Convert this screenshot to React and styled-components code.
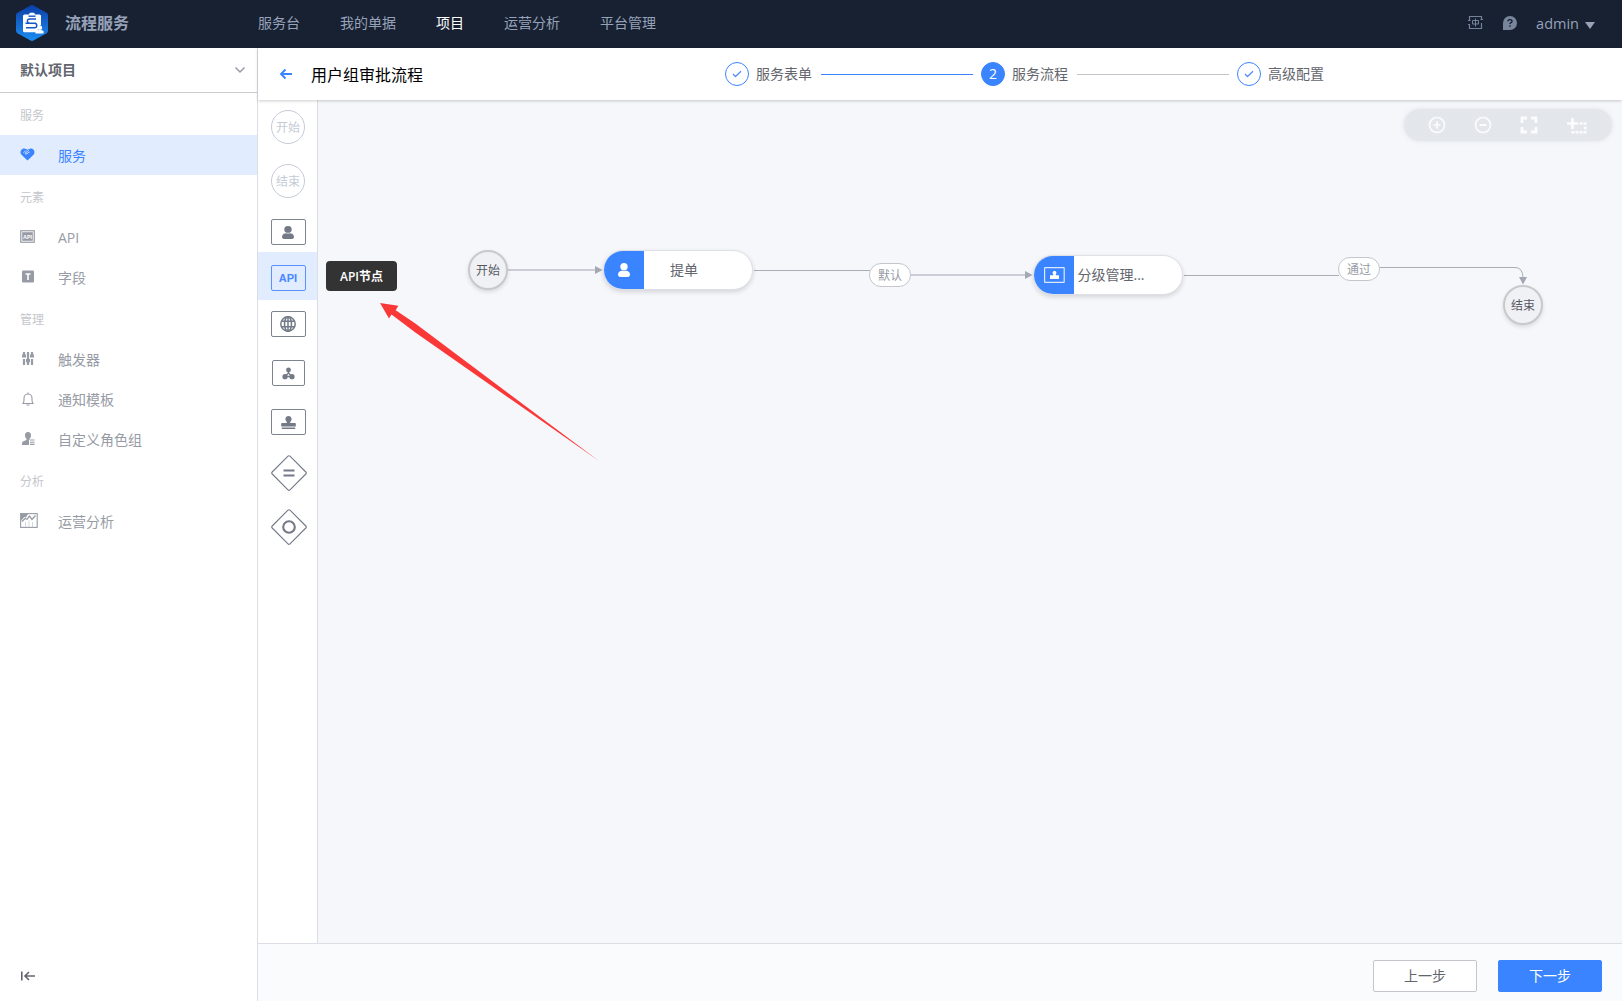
import React from "react";
import styled, { createGlobalStyle } from "styled-components";

const Global = createGlobalStyle`
  * { box-sizing: border-box; }
  body {
    margin: 0;
    font-family: "Open Sans", "Noto Sans CJK SC", sans-serif;
    font-size: 14px;
    color: #63656e;
  }
  svg { display: block; flex: none; }
`;

const Page = styled.div`
  display: flex;
  flex-direction: column;
  width: 100%;
  height: 100vh;
  min-height: 1001px;
  overflow: hidden;
  background: #fff;
`;

const TopBar = styled.header`
  display: flex;
  align-items: center;
  height: 48px;
  flex: none;
  padding: 0 27px 3px 16px;
  background: #182132;
  color: #96a2b9;
`;

const Brand = styled.div`
  display: flex;
  align-items: center;
  gap: 17px;
  width: 242px;
  font-size: 16px;
  font-weight: 700;
  line-height: 44px;
`;

const Nav = styled.nav`
  display: flex;
  gap: 40px;
  flex: 1;
`;

const NavItem = styled.span`
  line-height: 20px;
  color: ${(p) => (p.$active ? "#fff" : "#96a2b9")};
`;

const TopTools = styled.div`
  display: flex;
  align-items: center;
`;

const HelpLink = styled.span`
  margin-left: 20px;
`;

const User = styled.div`
  display: flex;
  align-items: center;
  gap: 6px;
  margin-left: 19px;
  padding-top: 2px;
  font-size: 14.5px;
  line-height: 20px;
`;

const Caret = styled.i`
  border: 5.5px solid transparent;
  border-top: 7px solid #96a2b9;
  border-bottom: 0;
  margin-top: 3px;
`;

const Body = styled.div`
  display: flex;
  flex: 1;
  min-height: 0;
`;

const Sidebar = styled.aside`
  display: flex;
  flex-direction: column;
  width: 258px;
  flex: none;
  border-right: 1px solid #dcdee5;
`;

const ProjectSelect = styled.div`
  display: flex;
  align-items: center;
  justify-content: space-between;
  height: 45px;
  padding: 0 11px 0 20px;
  border-bottom: 1px solid #cfcbd0;
  font-weight: 700;
  line-height: 20px;
  color: #63656e;
`;

const GroupTitle = styled.div`
  height: 42px;
  padding: 3px 20px 0;
  font-size: 12px;
  line-height: 39px;
  color: #c4c6cc;
`;

const MenuItem = styled.div`
  display: flex;
  align-items: center;
  height: 40px;
  padding-left: 20px;
  background: ${(p) => (p.$active ? "#e1ecff" : "transparent")};
  color: ${(p) => (p.$active ? "#3a84ff" : "#979ba5")};
`;

const MenuIcon = styled.span`
  width: 38px;
  margin-bottom: 1px;
`;

const MenuText = styled.span`
  padding-top: 2px;
  line-height: 20px;
`;

const Collapse = styled.div`
  margin-top: auto;
  padding: 0 0 18px 20px;
`;

const Main = styled.main`
  display: flex;
  flex-direction: column;
  flex: 1;
  min-width: 0;
`;

const PageHead = styled.div`
  display: flex;
  align-items: center;
  height: 52px;
  flex: none;
  padding-left: 21px;
  z-index: 1;
  background: #fff;
  box-shadow: 0 1px 3px rgba(0, 0, 0, 0.2);
`;

const PageTitle = styled.h1`
  width: 414px;
  margin: 0 0 0 18px;
  padding-top: 2px;
  font-size: 16px;
  font-weight: 400;
  line-height: 24px;
  color: #000;
`;

const Steps = styled.div`
  display: flex;
  align-items: center;
`;

const StepMark = styled.span`
  display: flex;
  align-items: center;
  justify-content: center;
  width: 24px;
  height: 24px;
  border: 1px solid #3a84ff;
  border-radius: 50%;
  background: ${(p) => (p.$current ? "#3a84ff" : "#fff")};
  color: #fff;
  line-height: 22px;
`;

const StepText = styled.span`
  width: 56px;
  margin-left: 7px;
  line-height: 20px;
  white-space: nowrap;
`;

const StepLine = styled.span`
  width: 152px;
  height: 1px;
  margin: 0 8px 0 9px;
  background: ${(p) => (p.$done ? "#3a84ff" : "#c4c6cc")};
`;

const Workspace = styled.div`
  display: flex;
  flex: 1;
  min-height: 0;
`;

const Palette = styled.div`
  width: 60px;
  flex: none;
  border-right: 1px solid #dcdee5;
  background: #fff;
`;

const PaletteRow = styled.div`
  display: flex;
  align-items: center;
  justify-content: center;
  position: relative;
  height: ${(p) => p.$h}px;
  padding-top: ${(p) => p.$top || 0}px;
  padding-left: ${(p) => p.$left || 1}px;
  background: ${(p) => (p.$active ? "#e1ecff" : "transparent")};
`;

const RoundTool = styled.span`
  width: 34px;
  height: 34px;
  border: 1px solid #c4cbd6;
  border-radius: 50%;
  font-size: 12px;
  line-height: 34px;
  text-align: center;
  color: #c4cbd6;
`;

const BoxTool = styled.span`
  display: flex;
  align-items: center;
  justify-content: center;
  width: ${(p) => p.$w || 35}px;
  height: 26px;
  border: 1px solid ${(p) => (p.$active ? "#5a90ff" : "#7d838f")};
  border-radius: 2px;
  color: ${(p) => (p.$active ? "#4a86ff" : "#737987")};
  font: bold 11px/24px "Liberation Sans", sans-serif;
`;

const Tip = styled.div`
  position: absolute;
  z-index: 3;
  left: 68px;
  top: 9px;
  width: 71px;
  height: 30px;
  border-radius: 4px;
  background: #333;
  font-size: 12px;
  font-weight: 600;
  line-height: 31px;
  text-align: center;
  white-space: nowrap;
  color: #fff;
`;

const Canvas = styled.div`
  position: relative;
  flex: 1;
  background: #f5f7fb;
`;

const Wires = styled.svg`
  position: absolute;
  left: 0;
  top: 0;
`;

const ZoomBar = styled.div`
  position: absolute;
  right: 10px;
  top: 9px;
  display: flex;
  align-items: center;
  gap: 28px;
  width: 208px;
  height: 32px;
  padding-left: 24px;
  border-radius: 16px;
  background: #e3e7ec;
  box-shadow: 0 0 4px rgba(200, 206, 216, 0.5);
`;

const Terminal = styled.div`
  position: absolute;
  left: ${(p) => p.$x}px;
  top: ${(p) => p.$y}px;
  width: 40px;
  height: 40px;
  border: 2px solid #c8c9cc;
  border-radius: 50%;
  background: #f0f1f5;
  box-shadow: 0 2px 4px rgba(0, 0, 0, 0.12);
  font-size: 12px;
  line-height: 37px;
  text-align: center;
  color: #575961;
`;

const TaskNode = styled.div`
  position: absolute;
  left: ${(p) => p.$x}px;
  top: ${(p) => p.$y}px;
  display: flex;
  width: 150px;
  height: 40px;
  border: 1px solid #dfe0e6;
  border-radius: 20px;
  overflow: hidden;
  background: #fff;
  box-shadow: 0 2px 5px rgba(0, 0, 0, 0.14);
`;

const TaskIcon = styled.span`
  display: flex;
  align-items: center;
  justify-content: center;
  width: 41px;
  margin-left: -1px;
  padding-left: 1px;
  background: #3a84ff;
`;

const TaskName = styled.span`
  width: 80px;
  padding-left: ${(p) => (p.$clipped ? 3.5 : 0)}px;
  line-height: 38px;
  text-align: ${(p) => (p.$clipped ? "left" : "center")};
  white-space: nowrap;
`;

const WireLabel = styled.span`
  position: absolute;
  left: ${(p) => p.$x}px;
  top: ${(p) => p.$y}px;
  width: 42px;
  height: 24px;
  border: 1px solid #c4c6cc;
  border-radius: 12px;
  background: #fff;
  font-size: 12px;
  line-height: 23px;
  text-align: center;
  color: #979ba5;
`;

const Footer = styled.footer`
  display: flex;
  align-items: flex-start;
  justify-content: flex-end;
  gap: 21px;
  height: 58px;
  flex: none;
  padding: 16px 20px 0;
  border-top: 1px solid #dcdee5;
  background: #fafbfd;
`;

const Button = styled.button`
  width: 104px;
  height: 32px;
  padding: 0;
  border: 1px solid ${(p) => (p.$primary ? "#3a84ff" : "#c4c6cc")};
  border-radius: 2px;
  background: ${(p) => (p.$primary ? "#3a84ff" : "#fff")};
  color: ${(p) => (p.$primary ? "#fff" : "#63656e")};
  font-family: inherit;
  font-size: 14px;
  line-height: 30px;
`;

const Logo = () => (
  <svg width="32" height="36" viewBox="0 0 32 36">
    <defs>
      <linearGradient id="hex" x1="0" y1="0" x2="0" y2="1">
        <stop offset="0" stopColor="#0b3fa8" />
        <stop offset="1" stopColor="#1c8df2" />
      </linearGradient>
    </defs>
    <path d="M14.5.5q1.500-.8 3 0l13 7.200q1.500.9 1.500 2.500v15.600q0 1.600-1.500 2.500l-13 7.200q-1.500.8-3 0l-13-7.200q-1.500-.9-1.500-2.500v-15.600q0-1.600 1.500-2.500z" fill="url(#hex)" />
    <path d="M8.500 9.500h4.500l.8-1.700h4.400l.8 1.700h4.500q1.500 0 1.500 1.500v9a3.500 3.500 0 0 0-2.500 5l-2.500 2.200H8.500Q7 27.200 7 25.700V11q0-1.500 1.500-1.500z" fill="#fff" />
    <g fill="none" stroke="#1558c4" strokeWidth="1.400">
      <path d="M12.500 11.200h7" />
      <path d="M20 14h-6.500a2 2 0 0 0 0 4.200H20M9.500 18.200h9a2.300 2.300 0 0 1 0 4.600H10" />
    </g>
    <circle cx="24" cy="22.800" r="2.200" fill="#fff" />
    <path d="M19.500 28.500v-2.500l3.300-1h2.400l2.300 1v2.500z" fill="#fff" />
  </svg>
);

const HeartIcon = () => (
  <svg width="15" height="13" viewBox="0 0 15 13">
    <path d="M1.400 1.700C2.600.3 4.600 0 6 .9l1.500.8L9 .9c1.400-.9 3.400-.6 4.600.8 1.300 1.500 1.100 3.700-.1 5.100L7.500 12.500 1.500 6.800C.3 5.400.1 3.200 1.400 1.700z" fill="#3a84ff" />
    <path d="M8.800 2.200 5 5.300q.6 1.300 2 .3L9.500 4M3.500 4.800l2.300-2.300" fill="none" stroke="#e1ecff" strokeWidth=".9" />
  </svg>
);

const ApiIcon = () => (
  <svg width="15" height="13" viewBox="0 0 15 13">
    <rect x=".75" y=".75" width="13.500" height="11.500" fill="#fff" stroke="#979ba5" strokeWidth="1.200" />
    <rect x="2.200" y="2.200" width="10.600" height="8.600" fill="#979ba5" />
    <text x="7.500" y="8.600" fontSize="5.500" fontWeight="700" fontFamily="Liberation Sans, sans-serif" fill="#fff" textAnchor="middle">API</text>
  </svg>
);

const FieldIcon = () => (
  <svg width="14" height="13" viewBox="0 0 14 13">
    <rect x="2" y=".5" width="12" height="12" rx="1" fill="#979ba5" />
    <path d="M5.500 4h5M8 4v6" stroke="#fff" strokeWidth="1.600" />
  </svg>
);

const TriggerIcon = () => (
  <svg width="14" height="13" viewBox="0 0 14 13">
    <path d="M4 0v4M8 0v7M12 0v4M4 7V13M8 10v3M12 7V13" stroke="#979ba5" strokeWidth="2.200" />
    <path d="M2 2.500h4v3H2zM6 7h4v3.300H6zM10 2.500h4v3h-4z" fill="#979ba5" />
  </svg>
);

const BellIcon = () => (
  <svg width="14" height="14" viewBox="0 0 14 14">
    <path d="M3 11.500q1-1.500 1-3.500V6a4 4 0 0 1 8 0v2q0 2 1 3.500z M8 .5V2 M6.500 13h3" fill="none" stroke="#979ba5" strokeWidth="1.100" />
  </svg>
);

const RoleIcon = () => (
  <svg width="15" height="13" viewBox="0 0 15 13">
    <path d="M8 0a3.300 3.300 0 0 1 3 3.500c0 1.500-.6 2.600-1.500 3.300v1.200H9v5H2v-2q0-1.500 2-2l2.500-1V6.800C5.600 6 5 5 5 3.500A3.300 3.300 0 0 1 8 0z" fill="#979ba5" />
    <path d="M10 8h4.500M10 10.200h4.500M10 12.400h4.500" stroke="#979ba5" strokeWidth="1.100" />
  </svg>
);

const ChartIcon = () => (
  <svg width="18" height="15" viewBox="0 0 18 15">
    <rect x=".6" y=".6" width="16.600" height="13.800" fill="#fff" stroke="#979ba5" strokeWidth="1.100" />
    <path d="M1 1h7L6 4.500 4.500 4 1 7.500z" fill="#979ba5" />
    <path d="M2 8.500 5 5.500l2 .8L9.500 3l2.500 3.500 3.500-4" fill="none" stroke="#979ba5" strokeWidth="1.300" />
    <path d="M5.500 9v5M9 7.500V14M12.500 9v5" stroke="#d5d7dc" strokeWidth="1" />
  </svg>
);

const LangIcon = () => (
  <svg width="15" height="15" viewBox="0 0 15 15" fill="none" stroke="#74819a">
    <path d="M1.500 5V1.500h12V4M13.500 8v5.500h-12V10M0 5.500h2.500M12.500 4.500H15M0 9.500h2" strokeWidth="1.200" />
    <path d="M4.500 5.500h6v3.500h-6zM7.500 3.500v8" strokeWidth="1" />
  </svg>
);

const HelpIcon = () => (
  <svg width="14" height="14" viewBox="0 0 14 14">
    <path d="M7 0a7 7 0 1 1 0 14H0V7a7 7 0 0 1 7-7z" fill="#79859d" />
    <path d="M5 5.300q0-1.700 2-1.700t2 1.600q0 .9-1 1.400-1 .4-1 1.500M7 9.200v1.500" fill="none" stroke="#182132" strokeWidth="1.400" />
  </svg>
);

const PersonIcon = ({ color, w = 12, h = 14 }) => (
  <svg width={w} height={h} viewBox="0 0 12 14" preserveAspectRatio="none">
    <circle cx="6" cy="3.700" r="3.700" fill={color} />
    <path d="M0 11.500C0 9 2 8 4 7.800q2 .8 4 0c2 .2 4 1.200 4 3.700Q12 14 9 14H3q-3 0-3-2.500z" fill={color} />
  </svg>
);

const GlobeIcon = () => (
  <svg width="16" height="16" viewBox="0 0 16 16" fill="none" stroke="#737987" strokeWidth="1.500">
    <circle cx="8" cy="8" r="7.200" />
    <ellipse cx="8" cy="8" rx="3.500" ry="7.200" />
    <path d="M8 1v14M1.500 5.300h13M1.500 10.700h13" />
  </svg>
);

const NetIcon = () => (
  <svg width="13" height="13" viewBox="0 0 13 13">
    <path d="M6.500 3v3L3 9.500h7L6.500 6" fill="none" stroke="#737987" strokeWidth="1.300" />
    <g fill="#737987">
      <circle cx="6.500" cy="3" r="2.400" />
      <circle cx="3" cy="9.700" r="2.600" />
      <circle cx="10" cy="9.700" r="2.600" />
    </g>
  </svg>
);

const StampIcon = () => (
  <svg width="15" height="13" viewBox="0 0 15 13" fill="#737987">
    <path d="M7.500 0a3.200 3.200 0 0 1 1.700 5.900V7H14q.8 0 .8.800V10.500H.2V7.800Q.2 7 1 7h4.800V5.900A3.200 3.200 0 0 1 7.500 0z" />
    <path d="M.8 11.500h13.400V13H.8z" />
  </svg>
);

const ApprovalIcon = () => (
  <svg width="21" height="16" viewBox="0 0 21 16">
    <rect x=".6" y=".6" width="19.600" height="14.800" rx=".5" fill="none" stroke="#dbe8ff" strokeWidth="1.200" />
    <path d="M10.500 3.700a2.100 2.100 0 0 1 1.300 3.600V8.300H15V12H6V8.300h3.200V7.300a2.100 2.100 0 0 1 1.300-3.600z" fill="#fff" />
  </svg>
);

const Diamond = ({ children }) => (
  <svg width="36" height="36" viewBox="0 0 36 36" fill="none" stroke="#737987">
    <path d="M17 1.200q1-1 2 0L34.800 17q1 1 0 2L19 34.800q-1 1-2 0L1.200 19q-1-1 0-2z" strokeWidth="1.100" />
    {children}
  </svg>
);

const Check = () => (
  <svg width="10" height="8" viewBox="0 0 10 8">
    <path d="M1 4l2.500 2.500L9 1.200" fill="none" stroke="#5a8cff" strokeWidth="1.300" />
  </svg>
);

const menu = [
  { title: "服务", items: [["服务", HeartIcon, true]] },
  { title: "元素", items: [["API", ApiIcon], ["字段", FieldIcon]] },
  { title: "管理", items: [["触发器", TriggerIcon], ["通知模板", BellIcon], ["自定义角色组", RoleIcon]] },
  { title: "分析", items: [["运营分析", ChartIcon]] },
];

const navItems = ["服务台", "我的单据", "项目", "运营分析", "平台管理"];

const FlowWires = () => (
  <Wires width="1304" height="843" viewBox="318 100 1304 843" fill="none">
    <path d="M508 270H596M911 275H1026" stroke="#cbced6" strokeWidth="2" />
    <path d="M754 270.500H870M1184 275.500H1339M1380 267.500H1515Q1523 267.500 1523 278" stroke="#a9adb6" />
    <path d="M595 266l7.500 4-7.500 4zM1025 271l7.500 4-7.500 4zM1519 277h8l-4 7.500z" fill="#a3a8b3" />
  </Wires>
);

const Pointer = () => (
  <Wires width="1304" height="843" viewBox="318 100 1304 843">
    <path d="M380 303L398.300 305.700 395.700 310.200 415 323.300 599 461 415 332.300 391.500 314.500 389 318.500z" fill="#fb3838" />
  </Wires>
);

export default function App() {
  return (
    <Page>
      <Global />
      <TopBar>
        <Brand>
          <Logo />
          流程服务
        </Brand>
        <Nav>
          {navItems.map((n) => (
            <NavItem key={n} $active={n === "项目"}>{n}</NavItem>
          ))}
        </Nav>
        <TopTools>
          <LangIcon />
          <HelpLink><HelpIcon /></HelpLink>
          <User>
            admin
            <Caret />
          </User>
        </TopTools>
      </TopBar>
      <Body>
        <Sidebar>
          <ProjectSelect>
            默认项目
            <svg width="12" height="8" viewBox="0 0 12 8">
              <path d="M1.500 1.500L6 6l4.500-4.500" fill="none" stroke="#979ba5" strokeWidth="1.500" />
            </svg>
          </ProjectSelect>
          {menu.map((g) => (
            <React.Fragment key={g.title}>
              <GroupTitle>{g.title}</GroupTitle>
              {g.items.map(([label, Icon, active]) => (
                <MenuItem key={label} $active={active}>
                  <MenuIcon><Icon /></MenuIcon>
                  <MenuText>{label}</MenuText>
                </MenuItem>
              ))}
            </React.Fragment>
          ))}
          <Collapse>
            <svg width="15" height="14" viewBox="0 0 15 14" fill="none" stroke="#63656e" strokeWidth="1.600">
              <path d="M1.800 2.500v9M4.800 7H15M9 3L5 7l4 4" />
            </svg>
          </Collapse>
        </Sidebar>
        <Main>
          <PageHead>
            <svg width="14" height="12" viewBox="0 0 14 12" fill="none" stroke="#3a84ff" strokeWidth="1.900">
              <path d="M2 6h11M6.500 1.500L2 6l4.500 4.500" />
            </svg>
            <PageTitle>用户组审批流程</PageTitle>
            <Steps>
              <StepMark><Check /></StepMark>
              <StepText>服务表单</StepText>
              <StepLine $done />
              <StepMark $current>2</StepMark>
              <StepText>服务流程</StepText>
              <StepLine />
              <StepMark><Check /></StepMark>
              <StepText>高级配置</StepText>
            </Steps>
          </PageHead>
          <Workspace>
            <Palette>
              <PaletteRow $h={54}><RoundTool>开始</RoundTool></PaletteRow>
              <PaletteRow $h={54}><RoundTool>结束</RoundTool></PaletteRow>
              <PaletteRow $h={44} $top={4}>
                <BoxTool><PersonIcon color="#737987" h={13} /></BoxTool>
              </PaletteRow>
              <PaletteRow $h={48} $top={4} $active>
                <BoxTool $active>API</BoxTool>
                <Tip>API节点</Tip>
              </PaletteRow>
              <PaletteRow $h={48}><BoxTool><GlobeIcon /></BoxTool></PaletteRow>
              <PaletteRow $h={50}><BoxTool $w={33}><NetIcon /></BoxTool></PaletteRow>
              <PaletteRow $h={48}><BoxTool><StampIcon /></BoxTool></PaletteRow>
              <PaletteRow $h={53} $left={3}>
                <Diamond><path d="M12.500 15.500h11M12.500 20.500h11" strokeWidth="2" /></Diamond>
              </PaletteRow>
              <PaletteRow $h={55} $left={3}>
                <Diamond><circle cx="18" cy="18" r="5.800" strokeWidth="2.100" /></Diamond>
              </PaletteRow>
            </Palette>
            <Canvas>
              <FlowWires />
              <Terminal $x={150} $y={150}>开始</Terminal>
              <TaskNode $x={285} $y={150}>
                <TaskIcon><PersonIcon color="#fff" /></TaskIcon>
                <TaskName>提单</TaskName>
              </TaskNode>
              <WireLabel $x={551} $y={163}>默认</WireLabel>
              <TaskNode $x={715} $y={155}>
                <TaskIcon><ApprovalIcon /></TaskIcon>
                <TaskName $clipped>分级管理...</TaskName>
              </TaskNode>
              <WireLabel $x={1020} $y={157}>通过</WireLabel>
              <Terminal $x={1185} $y={185}>结束</Terminal>
              <Pointer />
              <ZoomBar>
                <svg width="18" height="18" viewBox="0 0 18 18" fill="none" stroke="#fbfcfd" strokeWidth="1.700">
                  <circle cx="9" cy="9" r="7.500" /><path d="M9 5.500v7M5.500 9h7" />
                </svg>
                <svg width="18" height="18" viewBox="0 0 18 18" fill="none" stroke="#fbfcfd" strokeWidth="1.700">
                  <circle cx="9" cy="9" r="7.500" /><path d="M5.500 9h7" strokeWidth="2" />
                </svg>
                <svg width="18" height="18" viewBox="0 0 18 18" fill="none" stroke="#fbfcfd" strokeWidth="2.800">
                  <path d="M2 7V2h5M11 2h5v5M16 11v5h-5M7 16H2v-5" />
                </svg>
                <svg width="21" height="18" viewBox="0 0 21 18" fill="none" stroke="#fbfcfd" strokeWidth="2.600">
                  <path d="M6.500 2v11M1 7.500h11" />
                  <path d="M13.500 7.500h3M17.500 7.500h3M19.200 10.500v3M5.500 16.200h3M9.500 16.200h3M13.500 16.200h3M17.500 16.200h3" />
                </svg>
              </ZoomBar>
            </Canvas>
          </Workspace>
          <Footer>
            <Button>上一步</Button>
            <Button $primary>下一步</Button>
          </Footer>
        </Main>
      </Body>
    </Page>
  );
}
